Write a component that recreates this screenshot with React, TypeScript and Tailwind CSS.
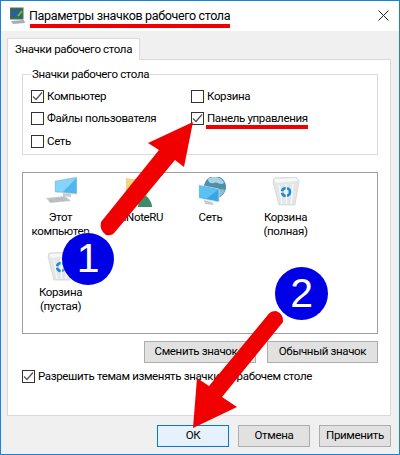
import React from "react";

const font = { fontFamily: 'Roboto, "Noto Sans", sans-serif' };

function Check({ checked }: { checked?: boolean }) {
  return (
    <span className="w-[13px] h-[13px] border border-[#333333] bg-white flex items-center justify-center shrink-0">
      {checked && (
        <svg width="11" height="11" viewBox="0 0 11 11">
          <path d="M1 5.5 L4 8.5 L10 1.5" fill="none" stroke="#555" strokeWidth="1.3" />
        </svg>
      )}
    </span>
  );
}

function Option({ label, checked }: { label: string; checked?: boolean }) {
  return (
    <label className="flex items-center gap-[3px] h-[22.5px]">
      <Check checked={checked} />
      <span>{label}</span>
    </label>
  );
}

function Btn({ label, className }: { label: string; className: string }) {
  return (
    <button className={"h-[22px] border flex items-center justify-center " + className}>{label}</button>
  );
}

function PcIcon() {
  return (
    <svg width="32" height="32" viewBox="0 0 32 32">
      <path d="M18 16 L26 17 L26 20 L18 19 Z" fill="#c8ccce" />
      <path d="M10 4 L32 0 L32 17 L10 15 Z" fill="#4fb6ee" stroke="#cfd6da" strokeWidth="0.7" />
      <path d="M10.5 4.5 L31.5 0.7 L18 15 L10.5 14.5 Z" fill="#86d4f7" />
      <path d="M1 21 L20 19 L26 24 L5 26 Z" fill="#c9cdd0" />
      <path d="M4 22.3 L20 20.6 M5 23.5 L22 21.8 M6 24.7 L24 23" stroke="#a2a7ab" strokeWidth="0.8" strokeDasharray="1.5 0.8" />
    </svg>
  );
}

function NoteIcon() {
  return (
    <svg width="32" height="32" viewBox="0 0 32 32">
      <path d="M6 1 L27 4 L27 22 L6 22 Z" fill="#f2d782" />
      <path d="M19 20 C24 16 28 20 29 22 C31 25 32 27 32 30 L18 30 Z" fill="#3f8a68" />
    </svg>
  );
}

function NetIcon() {
  return (
    <svg width="32" height="32" viewBox="0 0 32 32">
      <circle cx="20" cy="10" r="11" fill="#4f8fae" />
      <path d="M13 2 C18 -2 27 0 29 6 C25 9 22 4 19 6 C15 7 13 5 13 2 Z" fill="#a9d3e0" />
      <path d="M22 13 C25 12 28 12 30 13 C28 18 25 20 22 20 Z" fill="#8fbdd0" />
      <path d="M4 8 L24 12 L24 25 L4 21 Z" fill="#36a6e6" stroke="#d7e2e8" strokeWidth="0.7" />
      <path d="M4.5 8.5 L23.5 12.5 L11 22 L4.5 20.5 Z" fill="#5cc1f0" />
      <path d="M9 23 L17 25 L19 28 L10 27 Z" fill="#c6cace" />
    </svg>
  );
}

function BinIcon() {
  return (
    <svg width="32" height="32" viewBox="0 0 32 32">
      <path d="M4 1 L26 0 L29 4 L25 28 L9 28 L3 5 Z" fill="#e3e5e6" stroke="#cfd2d4" strokeWidth="0.7" />
      <path d="M4 2 L26 1 L28 4 L6 6 Z" fill="#f6f7f7" />
      <path d="M9 8 L12 27 M16 7 L16.5 27 M23 7 L21 27" stroke="#f5f6f6" strokeWidth="1.5" />
      <circle cx="16" cy="15" r="4" fill="none" stroke="#1a8ad6" strokeWidth="2.5" strokeDasharray="5 1.5" />
    </svg>
  );
}

function DesktopIcon({ icon, lines }: { icon: React.ReactNode; lines: string[] }) {
  return (
    <div className="w-[75px] h-[75px] flex flex-col items-center pt-[4px]">
      <div className="h-[32px]">{icon}</div>
      <div className="mt-[1px] text-center leading-[14px] whitespace-nowrap">
        {lines.map((l) => (
          <div key={l}>{l}</div>
        ))}
      </div>
    </div>
  );
}

export default function App() {
  return (
    <div
      className="relative w-[400px] h-[455px] overflow-hidden bg-[#f0f0f0] border-x border-b border-t border-[#1883d7] text-[11.5px] tracking-[-0.35px] text-black flex flex-col"
      style={font}
    >
      {/* title bar */}
      <div className="h-[30px] bg-white flex items-center pl-[9px] pr-[10px] shrink-0">
        <svg width="15" height="18" viewBox="0 0 15 18">
          <rect x="0" y="1" width="13" height="11" fill="#2b6c5a" stroke="#5a6a70" />
          <path d="M2 9 L10 3 M2 4 L6 7" stroke="#2f55c9" strokeWidth="2" />
          <path d="M8 9 L12 4" stroke="#6cc04a" strokeWidth="2" />
          <path d="M1 14 L14 13 L15 16 L3 17 Z" fill="#a9adb0" />
        </svg>
        <span className="ml-[4px] text-[12.5px] whitespace-nowrap">Параметры значков рабочего стола</span>
        <svg className="ml-auto -mt-[1px]" width="11" height="11" viewBox="0 0 11 11">
          <path d="M0.5 0.5 L10.5 10.5 M10.5 0.5 L0.5 10.5" stroke="#222" strokeWidth="1" />
        </svg>
      </div>

      {/* tabs */}
      <div className="flex pl-[6px] pt-[7px] shrink-0">
        <div className="w-[133px] h-[22px] bg-white border border-b-0 border-[#d9d9d9] flex items-center justify-center -mb-px relative z-10 whitespace-nowrap">
          Значки рабочего стола
        </div>
      </div>

      {/* panel */}
      <div className="ml-[6px] w-[384px] h-[357px] bg-white border border-[#d9d9d9] pl-[14px] pr-[12px] pt-[7px] shrink-0">
        <fieldset className="border border-[#dcdcdc] h-[89px] pl-[8px] -mt-[1px]">
          <legend className="px-[1px] leading-[16px]">Значки рабочего стола</legend>
          <div className="grid grid-cols-[160px_1fr] pt-[3px]">
            <Option label="Компьютер" checked />
            <Option label="Корзина" />
            <Option label="Файлы пользователя" />
            <Option label="Панель управления" checked />
            <Option label="Сеть" />
          </div>
        </fieldset>

        <div className="mt-[17px] h-[162px] border border-[#a0a0a0] bg-white flex flex-wrap content-start">
          <DesktopIcon icon={<PcIcon />} lines={["Этот", "компьютер"]} />
          <DesktopIcon icon={<NoteIcon />} lines={["WinNoteRU"]} />
          <DesktopIcon icon={<NetIcon />} lines={["Сеть"]} />
          <DesktopIcon icon={<BinIcon />} lines={["Корзина", "(полная)"]} />
          <DesktopIcon icon={<BinIcon />} lines={["Корзина", "(пустая)"]} />
        </div>

        <div className="flex justify-end gap-[11px] mt-[7px] whitespace-nowrap">
          <Btn label="Сменить значок..." className="w-[112px] bg-[#e1e1e1] border-[#adadad]" />
          <Btn label="Обычный значок" className="w-[111px] bg-[#e1e1e1] border-[#adadad]" />
        </div>

        <label className="flex items-center gap-[3px] mt-[5px]">
          <Check checked />
          <span>Разрешить темам изменять значки на рабочем столе</span>
        </label>
      </div>

      {/* footer */}
      <div className="flex justify-end gap-[9px] pr-[8px] mt-[9px]">
        <Btn label="ОК" className="w-[72px] bg-[#e5f1fb] border-[#0078d7]" />
        <Btn label="Отмена" className="w-[72px] bg-[#e1e1e1] border-[#adadad]" />
        <Btn label="Применить" className="w-[72px] bg-[#e1e1e1] border-[#adadad]" />
      </div>

      {/* annotations */}
      <svg className="absolute -left-px -top-px pointer-events-none" width="400" height="455" viewBox="0 0 400 455">
        <rect x="30" y="24" width="200" height="4" fill="#f00000" />
        <rect x="206" y="125" width="102" height="4" fill="#f00000" />
        <path
          d="M193 122 L148 143 L159 150 L101 222 Q99 230 106 235 Q112 236 115 232 L175 160 L184 167 Z"
          fill="#f00000"
        />
        <path
          d="M193 428 L237 407 L222 397 L283 322 Q284 314 276 311 Q270 311 267 316 L209 386 L197 378 Z"
          fill="#f00000"
        />
      </svg>
      <div
        className="absolute left-[61px] top-[232px] w-[52px] h-[52px] rounded-full bg-[#0000e6] shadow-[0_0_3px_#ffffff] text-white text-[41px] flex items-center justify-center"
        style={{ fontFamily: '"Liberation Sans", sans-serif' }}
      >
        1
      </div>
      <div
        className="absolute left-[274px] top-[266px] w-[53px] h-[53px] rounded-full bg-[#0000e6] shadow-[0_0_3px_#ffffff] text-white text-[41px] flex items-center justify-center"
        style={{ fontFamily: '"Liberation Sans", sans-serif' }}
      >
        2
      </div>
    </div>
  );
}
